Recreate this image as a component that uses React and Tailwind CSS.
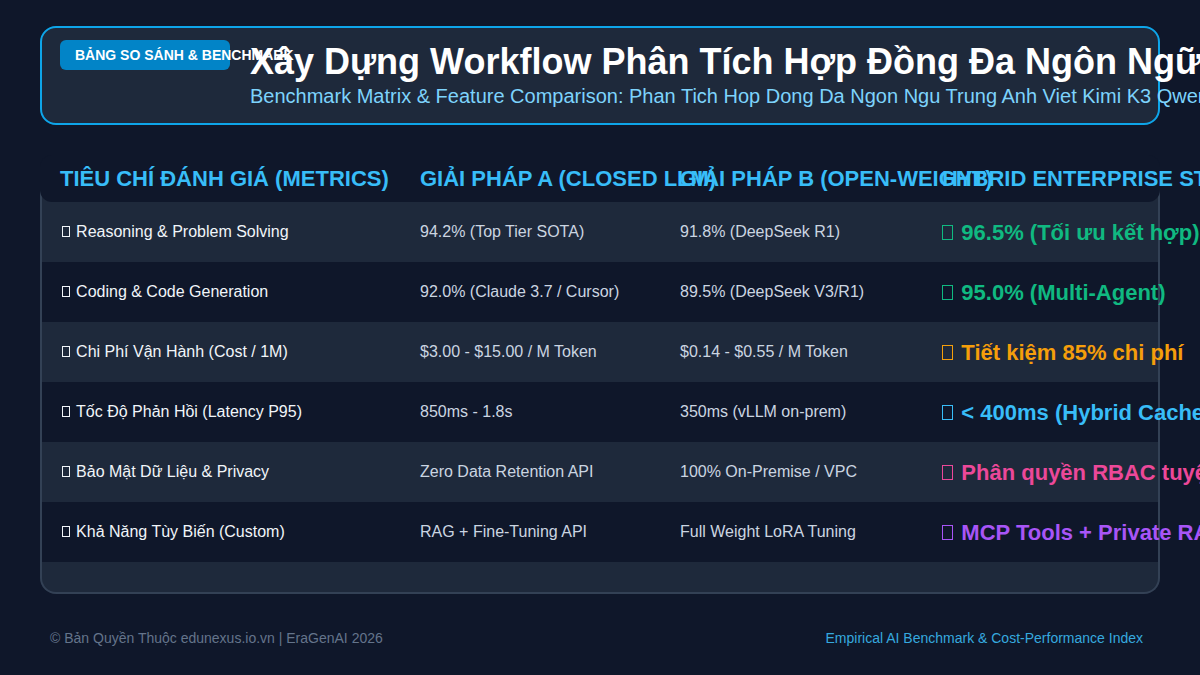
const rows = [
  {
    metric: "Reasoning & Problem Solving",
    a: "94.2% (Top Tier SOTA)",
    b: "91.8% (DeepSeek R1)",
    hybrid: "96.5% (Tối ưu kết hợp)",
    color: "text-[#10b981]",
  },
  {
    metric: "Coding & Code Generation",
    a: "92.0% (Claude 3.7 / Cursor)",
    b: "89.5% (DeepSeek V3/R1)",
    hybrid: "95.0% (Multi-Agent)",
    color: "text-[#10b981]",
  },
  {
    metric: "Chi Phí Vận Hành (Cost / 1M)",
    a: "$3.00 - $15.00 / M Token",
    b: "$0.14 - $0.55 / M Token",
    hybrid: "Tiết kiệm 85% chi phí",
    color: "text-[#f59e0b]",
  },
  {
    metric: "Tốc Độ Phản Hồi (Latency P95)",
    a: "850ms - 1.8s",
    b: "350ms (vLLM on-prem)",
    hybrid: "< 400ms (Hybrid Cache)",
    color: "text-[#38bdf8]",
  },
  {
    metric: "Bảo Mật Dữ Liệu & Privacy",
    a: "Zero Data Retention API",
    b: "100% On-Premise / VPC",
    hybrid: "Phân quyền RBAC tuyệt đối",
    color: "text-[#ec4899]",
  },
  {
    metric: "Khả Năng Tùy Biến (Custom)",
    a: "RAG + Fine-Tuning API",
    b: "Full Weight LoRA Tuning",
    hybrid: "MCP Tools + Private RAG",
    color: "text-[#a855f7]",
  },
];

const headers = [
  "Tiêu Chí Đánh Giá (Metrics)",
  "Giải Pháp A (Closed LLM)",
  "Giải Pháp B (Open-Weight)",
  "Hybrid Enterprise Stack",
];

// hộp "tofu" giống glyph emoji bị thiếu font trong ảnh gốc
function Tofu() {
  return (
    <span className="inline-block w-[0.5em] h-[0.66em] border border-current mr-[0.38em]" />
  );
}

export default function App() {
  return (
    <div className="w-[1200px] h-[675px] overflow-hidden bg-[#0f172a] font-['Liberation_Sans',Arial,sans-serif]">
      <div className="px-10 pt-[26px]">
        {/* Header card */}
        <div className="flex gap-5 rounded-2xl border-2 border-[#0ea5e9] bg-[#1e293b] pl-[18px] pt-3 pb-[15px]">
          <div className="shrink-0 w-[170px] h-[30px] rounded-md bg-[#0284c7] pl-[15px] flex items-center whitespace-nowrap text-[14px] font-bold text-white">
            BẢNG SO SÁNH &amp; BENCHMARK
          </div>
          <div className="whitespace-nowrap">
            <h1 className="text-[36px] leading-[44px] font-bold text-white">
              Xây Dựng Workflow Phân Tích Hợp Đồng Đa Ngôn Ngữ Trung Anh Việt
            </h1>
            <p className="text-[20px] leading-[24px] text-[#7dd3fc]">
              Benchmark Matrix &amp; Feature Comparison: Phan Tich Hop Dong Da Ngon Ngu Trung Anh Viet Kimi K3 Qwen 3.5
            </p>
          </div>
        </div>

        {/* Table */}
        <div className="mt-[30px] rounded-2xl border-2 border-t-0 border-[#334155] bg-[#1e293b]">
          <div className="-mx-[2px] grid grid-cols-[360px_260px_262px_1fr] h-[47px] items-center rounded-xl bg-[#0f172a] whitespace-nowrap text-[22px] font-bold uppercase text-[#38bdf8]">
            {headers.map((h) => (
              <div key={h} className="pl-5">
                {h}
              </div>
            ))}
          </div>
          {rows.map((r, i) => (
            <div
              key={r.metric}
              className={`grid grid-cols-[358px_260px_262px_1fr] h-[60px] items-center whitespace-nowrap ${
                i % 2 === 0 ? "bg-[#1e293b]" : "bg-[#0f172a]"
              }`}
            >
              <div className="pl-5 text-[16px] text-[#f1f5f9]">
                <Tofu />
                {r.metric}
              </div>
              <div className="pl-5 text-[16px] text-[#cbd5e1]">{r.a}</div>
              <div className="pl-5 text-[16px] text-[#cbd5e1]">{r.b}</div>
              <div className={`pl-5 text-[22px] font-bold ${r.color}`}>
                <Tofu />
                {r.hybrid}
              </div>
            </div>
          ))}
          <div className="h-[30px]" />
        </div>

        {/* Footer */}
        <div className="flex justify-between items-center pl-[10px] pr-[17px] pt-[34px] text-[14px]">
          <span className="text-[#64748b]">© Bản Quyền Thuộc edunexus.io.vn | EraGenAI 2026</span>
          <span className="text-[#36a9df]">Empirical AI Benchmark &amp; Cost-Performance Index</span>
        </div>
      </div>
    </div>
  );
}
